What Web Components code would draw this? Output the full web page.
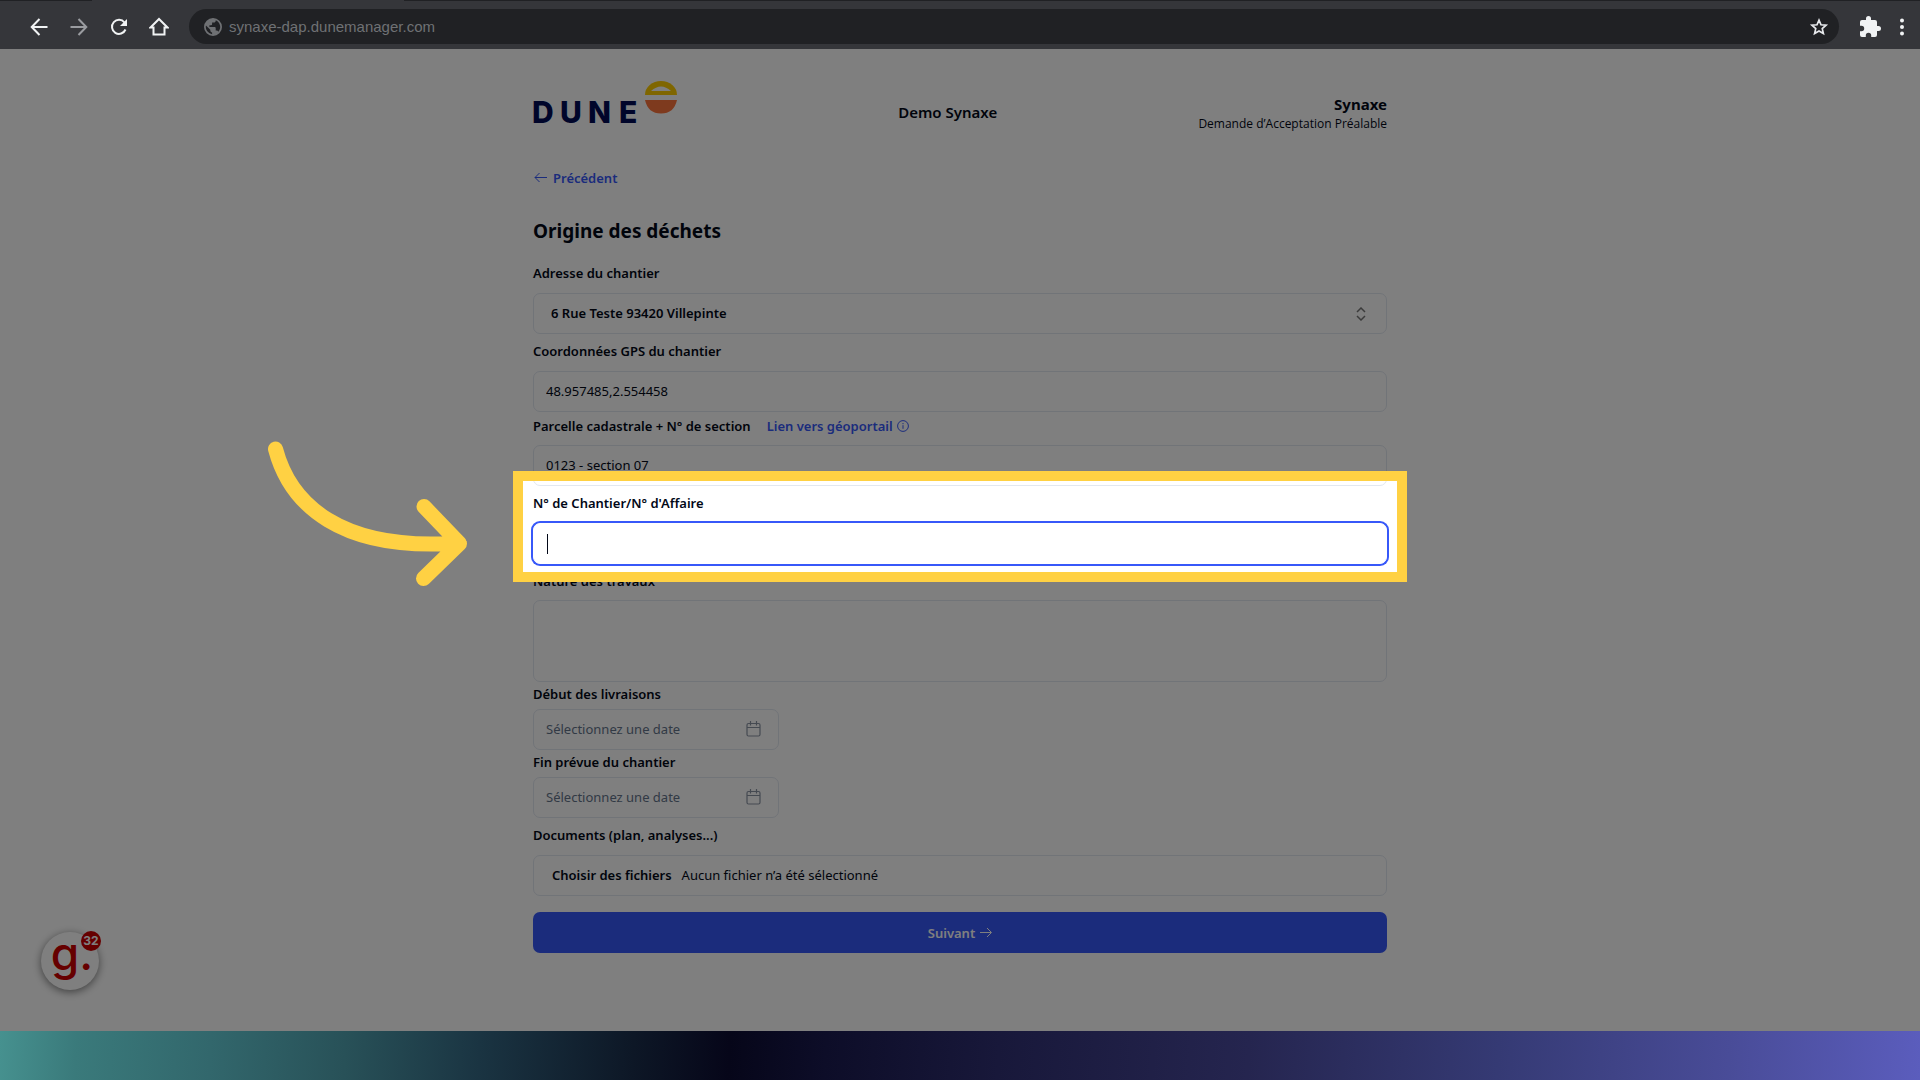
<!DOCTYPE html>
<html lang="fr">
<head>
<meta charset="utf-8">
<title>Demo Synaxe - Demande d'Acceptation Préalable</title>
<style>
  body{
    margin: 0;
    min-height: 100vh;
    display: grid;
    grid-template-rows: auto 1fr auto;
    font-family: "Noto Sans", "Open Sans", sans-serif;
    font-size: 13px;
    line-height: 20px;
    color: #020817;
    --primary: #3758f9;
    --line: #e2e8f0;
    --muted: #64748b;
    --accent: #ffd143;
  }
</style>
</head>
<body>

<browser-bar url="synaxe-dap.dunemanager.com"></browser-bar>

<dap-page>
  <dap-header company="Demo Synaxe" owner="Synaxe" subject="Demande d’Acceptation Préalable"></dap-header>
  <dap-form heading="Origine des déchets">
    <dap-field kind="select" label="Adresse du chantier" value="6 Rue Teste 93420 Villepinte"></dap-field>
    <dap-field kind="text" label="Coordonnées GPS du chantier" value="48.957485,2.554458"></dap-field>
    <dap-field kind="text" label="Parcelle cadastrale + N° de section" value="0123 - section 07" dense>
      <info-link>Lien vers géoportail</info-link>
    </dap-field>
    <dap-field kind="text" label="N° de Chantier/N° d'Affaire" active>
      <spot-light slot="overlay"></spot-light>
    </dap-field>
    <dap-field kind="textarea" label="Nature des travaux"></dap-field>
    <dap-field kind="date" label="Début des livraisons" value="Sélectionnez une date"></dap-field>
    <dap-field kind="date" label="Fin prévue du chantier" value="Sélectionnez une date"></dap-field>
    <dap-field kind="file" label="Documents (plan, analyses...)" value="Aucun fichier n’a été sélectionné"></dap-field>
    <dap-submit>Suivant</dap-submit>
  </dap-form>
  <guide-bubble slot="bubble" count="32"></guide-bubble>
</dap-page>

<color-band></color-band>

<template id="browser-bar">
  <style>
    :host{
      display: flex;
      align-items: center;
      box-sizing: border-box;
      height: 49px;
      padding: 4px 8px 0 19px;
      background: linear-gradient(90deg, #202124 92px, transparent 92px 404px, #202124 404px) top / 100% 1px no-repeat #35363a;
      font-family: "Liberation Sans", Arial, sans-serif;
      color: #f1f3f4;
    }
    button{
      display: grid;
      place-items: center;
      padding: 0;
      border: 0;
      background: none;
      color: inherit;
    }
    svg{ display: block; }
    nav{ display: flex; }
    nav button{ width: 40px; height: 32px; }
    nav .off{ color: #9a9ca0; }
    .address{
      flex: 1;
      display: flex;
      align-items: center;
      gap: 7px;
      height: 35px;
      box-sizing: border-box;
      margin-left: 10px;
      padding: 0 10px 0 15px;
      border-radius: 18px;
      background: #202124;
      color: #6f7174;
    }
    input{
      flex: 1;
      padding: 0;
      border: 0;
      outline: 0;
      background: none;
      font: 15px "Liberation Sans", Arial, sans-serif;
      color: inherit;
    }
    .address button{ color: #e8eaed; }
    .tools{ display: flex; gap: 11px; margin-left: 20px; }
  </style>
  <nav>
    <button aria-label="Retour"><svg width="18" height="18" viewBox="0 0 18 18" fill="none" stroke="currentColor" stroke-width="2"><path d="M17.500 9H2M9.500 1 1.700 9l7.800 8"/></svg></button>
    <button class="off" aria-label="Suivant"><svg width="18" height="18" viewBox="0 0 18 18" fill="none" stroke="currentColor" stroke-width="2"><path d="M.500 9H16M8.500 1l7.800 8-7.800 8"/></svg></button>
    <button aria-label="Actualiser"><svg width="18" height="18" viewBox="0 0 18 18" fill="none" stroke="currentColor" stroke-width="2"><path d="M15.500 11.500A7 7 0 1 1 14.500 4.500"/><path d="M17 1v7h-7z" fill="currentColor" stroke="none"/></svg></button>
    <button aria-label="Accueil"><svg width="20" height="20" viewBox="0 0 20 20" fill="none" stroke="currentColor" stroke-width="2"><path d="M1.500 10.500 10 2l8.500 8.500H15.500v7h-11v-7z"/></svg></button>
  </nav>
  <div class="address">
    <svg width="18" height="18" viewBox="2 2 20 20" fill="currentColor"><path d="M12 2a10 10 0 1 0 0 20 10 10 0 0 0 0-20zm-1 17.930A8 8 0 0 1 4.200 10.200L9 15v1c0 1.100.9 2 2 2zm6.900-2.540A2 2 0 0 0 16 16h-1v-3c0-.55-.45-1-1-1H8v-2h2c.55 0 1-.45 1-1V7h2c1.100 0 2-.9 2-2v-.410a8 8 0 0 1 2.900 12.800z"/></svg>
    <input type="text" aria-label="Adresse">
    <button aria-label="Favori"><svg width="20" height="20" viewBox="0 0 24 24" fill="none" stroke="currentColor" stroke-width="2"><path d="m12 3.700 2.400 5.700 6.100.5-4.600 4 1.400 6-5.300-3.200-5.300 3.200 1.400-6-4.600-4 6.100-.5z"/></svg></button>
  </div>
  <div class="tools">
    <button aria-label="Extensions"><svg width="22" height="22" viewBox="1 1 22 22" fill="currentColor"><path d="M20.500 11H19V7a2 2 0 0 0-2-2h-4V3.500a2.500 2.500 0 0 0-5 0V5H4a2 2 0 0 0-2 2v3.800h1.500a2.700 2.700 0 0 1 0 5.400H2V20a2 2 0 0 0 2 2h3.800v-1.500a2.700 2.700 0 0 1 5.400 0V22H17a2 2 0 0 0 2-2v-4h1.500a2.500 2.500 0 0 0 0-5z"/></svg></button>
    <button aria-label="Menu"><svg width="20" height="20" viewBox="0 0 20 20" fill="currentColor"><circle cx="10" cy="3.500" r="2"/><circle cx="10" cy="10" r="2"/><circle cx="10" cy="16.500" r="2"/></svg></button>
  </div>
</template>

<template id="dap-page">
  <style>
    :host{
      display: block;
      position: relative;
      overflow: hidden;
      isolation: isolate;
      background: white;
    }
    main{
      max-width: 854px;
      margin: 0 auto;
      padding: 32px 24px 64px;
    }
  </style>
  <main><slot></slot></main>
  <slot name="bubble"></slot>
</template>

<template id="dap-header">
  <style>
    :host{
      display: flex;
      align-items: center;
      justify-content: space-between;
      height: 62px;
    }
    svg{
      display: block;
      align-self: flex-start;
      overflow: visible;
    }
    text{
      font-family: Inter, sans-serif;
      font-size: 30px;
      font-weight: 800;
      fill: #000a54;
    }
    .company{ font-size: 15px; font-weight: 600; }
    .right{ padding-top: 4px; text-align: right; }
    .owner{ font-size: 15px; font-weight: 700; }
    .subject{ font-family: "Open Sans", sans-serif; font-size: 12px; }
  </style>
  <svg width="164" height="60" viewBox="0 0 164 60" role="img" aria-label="Dune">
    <text x="-1 27 55 86" y="42">DUNE</text>
    <path d="M112 14a16 14 0 0 1 32 0z" fill="#ffcc00"/>
    <path d="M118 10q10-9 20 0z" fill="white"/>
    <path d="M112 19h32q-3 13.500-16 13.500t-16-13.500z" fill="#fc743c"/>
  </svg>
  <div class="company"></div>
  <div class="right">
    <div class="owner"></div>
    <div class="subject"></div>
  </div>
</template>

<template id="dap-form">
  <style>
    :host{ display: block; }
    form{ display: flex; flex-direction: column; }
    a{
      align-self: flex-start;
      display: flex;
      align-items: center;
      gap: 6px;
      margin-top: 25px;
      font-weight: 600;
      color: var(--primary);
      text-decoration: none;
    }
    h1{
      margin: 28px 0 17px;
      font-size: 19px;
      line-height: 30px;
      font-weight: 700;
    }
  </style>
  <form>
    <a href="#"><svg width="14" height="14" viewBox="0 0 14 14" fill="none" stroke="currentColor"><path d="M14 6.500H2M6.500 2 2 6.500 6.500 11"/></svg>Précédent</a>
    <h1></h1>
    <slot></slot>
  </form>
</template>

<template id="dap-field">
  <style>
    :host{
      display: block;
      position: relative;
      margin-bottom: 7px;
    }
    .head{
      display: flex;
      gap: 16px;
      margin-bottom: 10px;
      font-weight: 600;
    }
    :host([dense]){ margin-top: -3px; }
    :host([dense]) .head{ margin-bottom: 9px; }
    :host([kind="textarea"]){ margin-bottom: 2px; }
    :host([kind="textarea"]) .head{ margin-bottom: 9px; }
    :host([kind="date"]) .head{ margin-bottom: 5px; }
    :host([kind="date"]){ margin-bottom: 2px; }
    :host([kind="file"]){ margin-top: 5px; margin-bottom: 16px; }
    .box{
      display: flex;
      align-items: center;
      box-sizing: border-box;
      width: 100%;
      height: 41px;
      margin: 0;
      padding: 0 12px 1px;
      border: 1px solid var(--line);
      border-radius: 7px;
      background-color: white;
      font: inherit;
      color: inherit;
      text-align: left;
      outline: 0;
    }
    textarea.box{ display: block; height: 82px; resize: none; }
    .stack{ display: grid; align-items: center; }
    .stack > *{ grid-area: 1 / 1; }
    .stack svg{ justify-self: end; margin-right: 19px; pointer-events: none; }
    select.box{
      appearance: none;
      padding: 0 17px 1px;
      font-weight: 600;
    }
    button.box{
      justify-content: space-between;
      width: 246px;
      padding-right: 17px;
      color: var(--muted);
    }
    .file{ gap: 10px; padding: 0 18px 1px; }
    .file label{ font-weight: 600; }
    .hidden{
      position: absolute;
      opacity: 0;
      width: 1px;
      height: 1px;
    }
    /* text cursor of the field being filled in */
    :host([active]) .box{
      border-color: white;
      box-shadow: 0 0 0 2px var(--primary);
      background: linear-gradient(#020817, #020817) 13px center / 1px 20px no-repeat white;
      caret-color: transparent;
    }
  </style>
  <div class="head"><label for="control"></label><slot></slot></div>
  <div class="body"></div>
  <slot name="overlay"></slot>
</template>

<template id="info-link">
  <style>
    :host{ display: block; }
    a{
      display: flex;
      align-items: center;
      gap: 4px;
      color: var(--primary);
      text-decoration: none;
    }
  </style>
  <a href="#"><slot></slot><svg width="12" height="12" viewBox="0 0 12 12" fill="none" stroke="currentColor"><circle cx="6" cy="6" r="5.400"/><path d="M6 5.200v3.600M6 3v1.200"/></svg></a>
</template>

<template id="spot-light">
  <style>
    /* dims everything on the page but the frame's inside */
    :host{
      position: absolute;
      z-index: 10;
      inset: -22px -20px -18px;
      border: 10px solid var(--accent);
      box-shadow: 0 0 0 2000px rgba(0, 0, 0, .5);
      pointer-events: none;
    }
    svg{
      position: absolute;
      right: calc(100% + 51px);
      top: -43px;
    }
  </style>
  <svg width="208" height="152" viewBox="264 438 208 152" fill="none" stroke="#ffd143" stroke-width="15" stroke-linecap="round" stroke-linejoin="round">
    <path d="M275.500 449C290 504 340 552 459 543M424 506.500 459.500 543.500 423.500 578.500"/>
  </svg>
</template>

<template id="dap-submit">
  <style>
    :host{ display: block; }
    button{
      display: flex;
      align-items: center;
      justify-content: center;
      gap: 5px;
      width: 100%;
      height: 41px;
      border: 0;
      border-radius: 7px;
      background: var(--primary);
      font: inherit;
      font-weight: 600;
      color: white;
    }
  </style>
  <button type="button"><slot></slot><svg width="12" height="12" viewBox="0 0 12 12" fill="none" stroke="currentColor"><path d="M0 5.500h11M7 1 11.500 5.500 7 10"/></svg></button>
</template>

<template id="guide-bubble">
  <style>
    :host{
      position: absolute;
      left: 41px;
      bottom: 41px;
    }
    button{
      position: relative;
      display: grid;
      place-items: center;
      width: 58px;
      height: 58px;
      padding: 0 0 16px 4px;
      border: 0;
      border-radius: 50%;
      background: white;
      box-shadow: 0 2px 8px rgba(0, 0, 0, .5);
      font: 500 46px/40px Inter, sans-serif;
      color: #cc0000;
    }
    .count{
      position: absolute;
      top: -1px;
      right: -2px;
      width: 20px;
      border-radius: 50%;
      background: #cc0000;
      font: 700 12px/20px Inter, sans-serif;
      color: white;
    }
  </style>
  <button aria-label="Guide"><span>g.</span><span class="count"></span></button>
</template>

<template id="color-band">
  <style>
    :host{
      display: block;
      height: 49px;
      background: linear-gradient(93deg, #46918f 0%, #3a7a7b 4%, #32676c 11%, #285158 18%, #1a3442 25%, #0d1726 33%, #060619 38%, #0d0d28 43%, #18183a 52%, #25254f 65%, #353a74 78%, #494c98 90%, #5b5dbd 100%);
    }
  </style>
</template>

<script>
  class BaseElement extends HTMLElement {
    constructor() {
      super();
      this.shadow = this.attachShadow({mode: "open"});
      const template = document.getElementById(this.localName);
      this.shadow.appendChild(template.content.cloneNode(true));
    }
    $(selector){
      return this.shadow.querySelector(selector);
    }
    attr(name){
      return this.getAttribute(name) || "";
    }
  }

  class BrowserBar extends BaseElement {
    connectedCallback(){
      this.$("input").value = this.attr("url");
    }
  }

  class DapHeader extends BaseElement {
    connectedCallback(){
      this.$(".company").textContent = this.attr("company");
      this.$(".owner").textContent = this.attr("owner");
      this.$(".subject").textContent = this.attr("subject");
    }
  }

  class DapForm extends BaseElement {
    connectedCallback(){
      this.$("h1").textContent = this.attr("heading");
    }
  }

  const controls = {
    text: () => `<input class="box" id="control" type="text">`,
    textarea: () => `<textarea class="box" id="control"></textarea>`,
    select: value => `
      <div class="stack">
        <select class="box" id="control"><option>${value}</option></select>
        <svg width="14" height="14" viewBox="0 0 14 14" fill="none" stroke="#777" stroke-width="1.500"><path d="M3 5l4-4 4 4M3 9l4 4 4-4"/></svg>
      </div>`,
    date: value => `
      <button class="box" id="control" type="button">${value}
        <svg width="15" height="16" viewBox="0 0 15 16" fill="none" stroke="#8b94a3" stroke-width="1.200"><rect x="1" y="2.500" width="13" height="12.500" rx="1.500"/><path d="M1 6.500h13M4.500 0v4.500M10.500 0v4.500"/></svg>
      </button>`,
    file: value => `
      <div class="box file">
        <input class="hidden" id="control" type="file" multiple>
        <label for="control">Choisir des fichiers</label><span>${value}</span>
      </div>`
  };

  class DapField extends BaseElement {
    connectedCallback(){
      const kind = this.attr("kind");
      this.$("label").textContent = this.attr("label");
      this.$(".body").innerHTML = controls[kind](this.attr("value"));
      if(kind === "text"){
        this.$("#control").value = this.attr("value");
      }
    }
  }

  class GuideBubble extends BaseElement {
    connectedCallback(){
      this.$(".count").textContent = this.attr("count");
    }
  }

  customElements.define("browser-bar", BrowserBar);
  customElements.define("dap-page", class extends BaseElement {});
  customElements.define("dap-header", DapHeader);
  customElements.define("dap-form", DapForm);
  customElements.define("dap-field", DapField);
  customElements.define("info-link", class extends BaseElement {});
  customElements.define("spot-light", class extends BaseElement {});
  customElements.define("dap-submit", class extends BaseElement {});
  customElements.define("guide-bubble", GuideBubble);
  customElements.define("color-band", class extends BaseElement {});
</script>
</body>
</html>
